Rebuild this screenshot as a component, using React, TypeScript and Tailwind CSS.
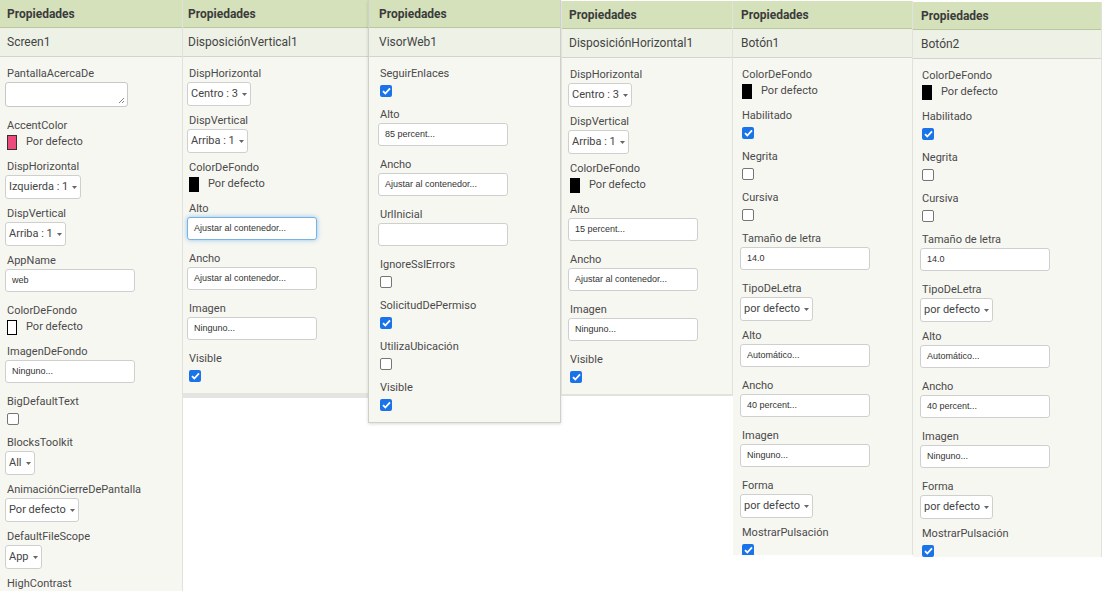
type Row =
  | { kind: 'textarea'; label: string }
  | { kind: 'color'; label: string; swatch: string }
  | { kind: 'select'; label: string; value: string }
  | { kind: 'input'; label: string; value: string; focus?: boolean }
  | { kind: 'check'; label: string; checked: boolean }

type Panel = {
  title: string
  width: string
  pad: string
  headPad: string
  top: string
  height: string
  frame: string
  rows: Row[]
}

const pink = 'bg-[#ee4a7d] border border-[#333]'
const black = 'bg-black'
const white = 'bg-white border border-black'

const buttonRows = (): Row[] => [
  { kind: 'color', label: 'ColorDeFondo', swatch: black },
  { kind: 'check', label: 'Habilitado', checked: true },
  { kind: 'check', label: 'Negrita', checked: false },
  { kind: 'check', label: 'Cursiva', checked: false },
  { kind: 'input', label: 'Tamaño de letra', value: '14.0' },
  { kind: 'select', label: 'TipoDeLetra', value: 'por defecto' },
  { kind: 'input', label: 'Alto', value: 'Automático...' },
  { kind: 'input', label: 'Ancho', value: '40 percent...' },
  { kind: 'input', label: 'Imagen', value: 'Ninguno...' },
  { kind: 'select', label: 'Forma', value: 'por defecto' },
  { kind: 'check', label: 'MostrarPulsación', checked: true },
]

const panels: Panel[] = [
  {
    title: 'Screen1',
    width: 'w-[183px]',
    pad: 'pl-[5px]',
    headPad: 'pl-[7px]',
    top: 'mt-0',
    height: 'h-[591px]',
    frame: 'border-r border-[#e2e2dc]',
    rows: [
      { kind: 'textarea', label: 'PantallaAcercaDe' },
      { kind: 'color', label: 'AccentColor', swatch: pink },
      { kind: 'select', label: 'DispHorizontal', value: 'Izquierda : 1' },
      { kind: 'select', label: 'DispVertical', value: 'Arriba : 1' },
      { kind: 'input', label: 'AppName', value: 'web' },
      { kind: 'color', label: 'ColorDeFondo', swatch: white },
      { kind: 'input', label: 'ImagenDeFondo', value: 'Ninguno...' },
      { kind: 'check', label: 'BigDefaultText', checked: false },
      { kind: 'select', label: 'BlocksToolkit', value: 'All' },
      { kind: 'select', label: 'AnimaciónCierreDePantalla', value: 'Por defecto' },
      { kind: 'select', label: 'DefaultFileScope', value: 'App' },
      { kind: 'check', label: 'HighContrast', checked: false },
    ],
  },
  {
    title: 'DisposiciónVertical1',
    width: 'w-[185px]',
    pad: 'pl-[4px]',
    headPad: 'pl-[5px]',
    top: 'mt-0',
    height: 'h-auto',
    frame: 'border-b-[5px] border-[#e4e4e0]',
    rows: [
      { kind: 'select', label: 'DispHorizontal', value: 'Centro : 3' },
      { kind: 'select', label: 'DispVertical', value: 'Arriba : 1' },
      { kind: 'color', label: 'ColorDeFondo', swatch: black },
      { kind: 'input', label: 'Alto', value: 'Ajustar al contenedor...', focus: true },
      { kind: 'input', label: 'Ancho', value: 'Ajustar al contenedor...' },
      { kind: 'input', label: 'Imagen', value: 'Ninguno...' },
      { kind: 'check', label: 'Visible', checked: true },
    ],
  },
  {
    title: 'VisorWeb1',
    width: 'w-[193px]',
    pad: 'pl-[9px]',
    headPad: 'pl-[10px]',
    top: 'mt-0',
    height: 'h-auto',
    frame: 'border border-t-0 border-[#cfcfcb] shadow-[0_1px_3px_rgba(0,0,0,0.15)]',
    rows: [
      { kind: 'check', label: 'SeguirEnlaces', checked: true },
      { kind: 'input', label: 'Alto', value: '85 percent...' },
      { kind: 'input', label: 'Ancho', value: 'Ajustar al contenedor...' },
      { kind: 'input', label: 'UrlInicial', value: '' },
      { kind: 'check', label: 'IgnoreSslErrors', checked: false },
      { kind: 'check', label: 'SolicitudDePermiso', checked: true },
      { kind: 'check', label: 'UtilizaUbicación', checked: false },
      { kind: 'check', label: 'Visible', checked: true },
    ],
  },
  {
    title: 'DisposiciónHorizontal1',
    width: 'w-[172px]',
    pad: 'pl-[6px]',
    headPad: 'pl-[7px]',
    top: 'mt-px',
    height: 'h-auto',
    frame: 'border-x border-b-2 border-[#e2e2dc]',
    rows: [
      { kind: 'select', label: 'DispHorizontal', value: 'Centro : 3' },
      { kind: 'select', label: 'DispVertical', value: 'Arriba : 1' },
      { kind: 'color', label: 'ColorDeFondo', swatch: black },
      { kind: 'input', label: 'Alto', value: '15 percent...' },
      { kind: 'input', label: 'Ancho', value: 'Ajustar al contenedor...' },
      { kind: 'input', label: 'Imagen', value: 'Ninguno...' },
      { kind: 'check', label: 'Visible', checked: true },
    ],
  },
  {
    title: 'Botón1',
    width: 'w-[180px]',
    pad: 'pl-[7px]',
    headPad: 'pl-[8px]',
    top: 'mt-px',
    height: 'h-[554px]',
    frame: 'border-r border-[#e2e2dc]',
    rows: buttonRows(),
  },
  {
    title: 'Botón2',
    width: 'w-[189px]',
    pad: 'pl-[7px]',
    headPad: 'pl-[8px]',
    top: 'mt-[2px]',
    height: 'h-[555px]',
    frame: 'border-r border-[#e2e2dc]',
    rows: buttonRows(),
  },
]

function Caret() {
  return (
    <svg width="5" height="3" viewBox="0 0 5 3" className="ml-[4px]">
      <path d="M0 0h5L2.5 3z" fill="#666" />
    </svg>
  )
}

function Check({ checked }: { checked: boolean }) {
  if (!checked)
    return <div className="mt-[4px] mb-[11px] ml-[2px] w-[12px] h-[12px] rounded-[2px] border border-[#767676] bg-white" />
  return (
    <div className="mt-[4px] mb-[11px] ml-[2px] w-[12px] h-[12px] rounded-[2px] bg-[#1a73e8] flex items-center justify-center">
      <svg width="9" height="8" viewBox="0 0 9 8">
        <path d="M1 4.2l2.3 2.3L8 1.4" fill="none" stroke="white" strokeWidth="1.8" />
      </svg>
    </div>
  )
}

function Prop({ row }: { row: Row }) {
  return (
    <div className="flex flex-col items-start">
      <div className="h-[14px] leading-[14px] text-[11px] text-[#4a4a4a] pl-[2px] whitespace-nowrap">{row.label}</div>
      {row.kind === 'textarea' && (
        <div className="relative mt-px mb-[12px] w-[123px] h-[25px] bg-white border border-[#c8c8c8] rounded-[3px]">
          <svg width="7" height="7" viewBox="0 0 7 7" className="absolute right-[2px] bottom-[2px]">
            <path d="M6 1L1 6M6 4L4 6" stroke="#777" strokeWidth="0.9" />
          </svg>
        </div>
      )}
      {row.kind === 'color' && (
        <div className="mt-[2px] mb-[10px] h-[15px] pl-[2px] flex items-center">
          <span className={`w-[10px] h-[15px] ${row.swatch}`} />
          <span className="ml-[9px] text-[11px] text-[#4a4a4a]">Por defecto</span>
        </div>
      )}
      {row.kind === 'select' && (
        <div className="mt-px mb-[8px] h-[24px] px-[3px] flex items-center bg-white border border-[#cfcfcf] rounded-[3px] text-[11px] text-[#444]">
          {row.value}
          <Caret />
        </div>
      )}
      {row.kind === 'input' && (
        <div
          className={`mt-px mb-[12px] w-[130px] h-[23px] px-[6px] flex items-center bg-white rounded-[3px] text-[9px] text-[#333] font-['Liberation_Sans',sans-serif] ${
            row.focus
              ? 'border border-[#79b2e3] shadow-[0_0_5px_rgba(102,175,233,0.7)]'
              : 'border border-[#cfcfcf]'
          }`}
        >
          {row.value}
        </div>
      )}
      {row.kind === 'check' && <Check checked={row.checked} />}
    </div>
  )
}

function PanelBox({ p }: { p: Panel }) {
  return (
    <div className={`${p.width} ${p.top} shrink-0`}>
      <div className={`${p.height} overflow-hidden flex flex-col bg-[#f7f7f2] ${p.frame}`}>
        <div className={`h-[28px] shrink-0 flex items-center ${p.headPad} bg-[#d5e1bb] border-b border-[#b9c6a0] text-[12px] font-bold text-[#3b3b3b]`}>
          Propiedades
        </div>
        <div className={`h-[29px] shrink-0 flex items-center ${p.headPad} bg-[#eef1e6] border-b border-[#d3d5cc] text-[12px] text-[#444]`}>
          {p.title}
        </div>
        <div className={`pt-[10px] ${p.pad}`}>
          {p.rows.map((r, i) => (
            <Prop key={i} row={r} />
          ))}
        </div>
      </div>
    </div>
  )
}

export default function App() {
  return (
    <div className="w-[1106px] h-[591px] overflow-hidden bg-white flex items-start font-['Roboto',sans-serif]">
      {panels.map((p, i) => (
        <PanelBox key={i} p={p} />
      ))}
    </div>
  )
}
